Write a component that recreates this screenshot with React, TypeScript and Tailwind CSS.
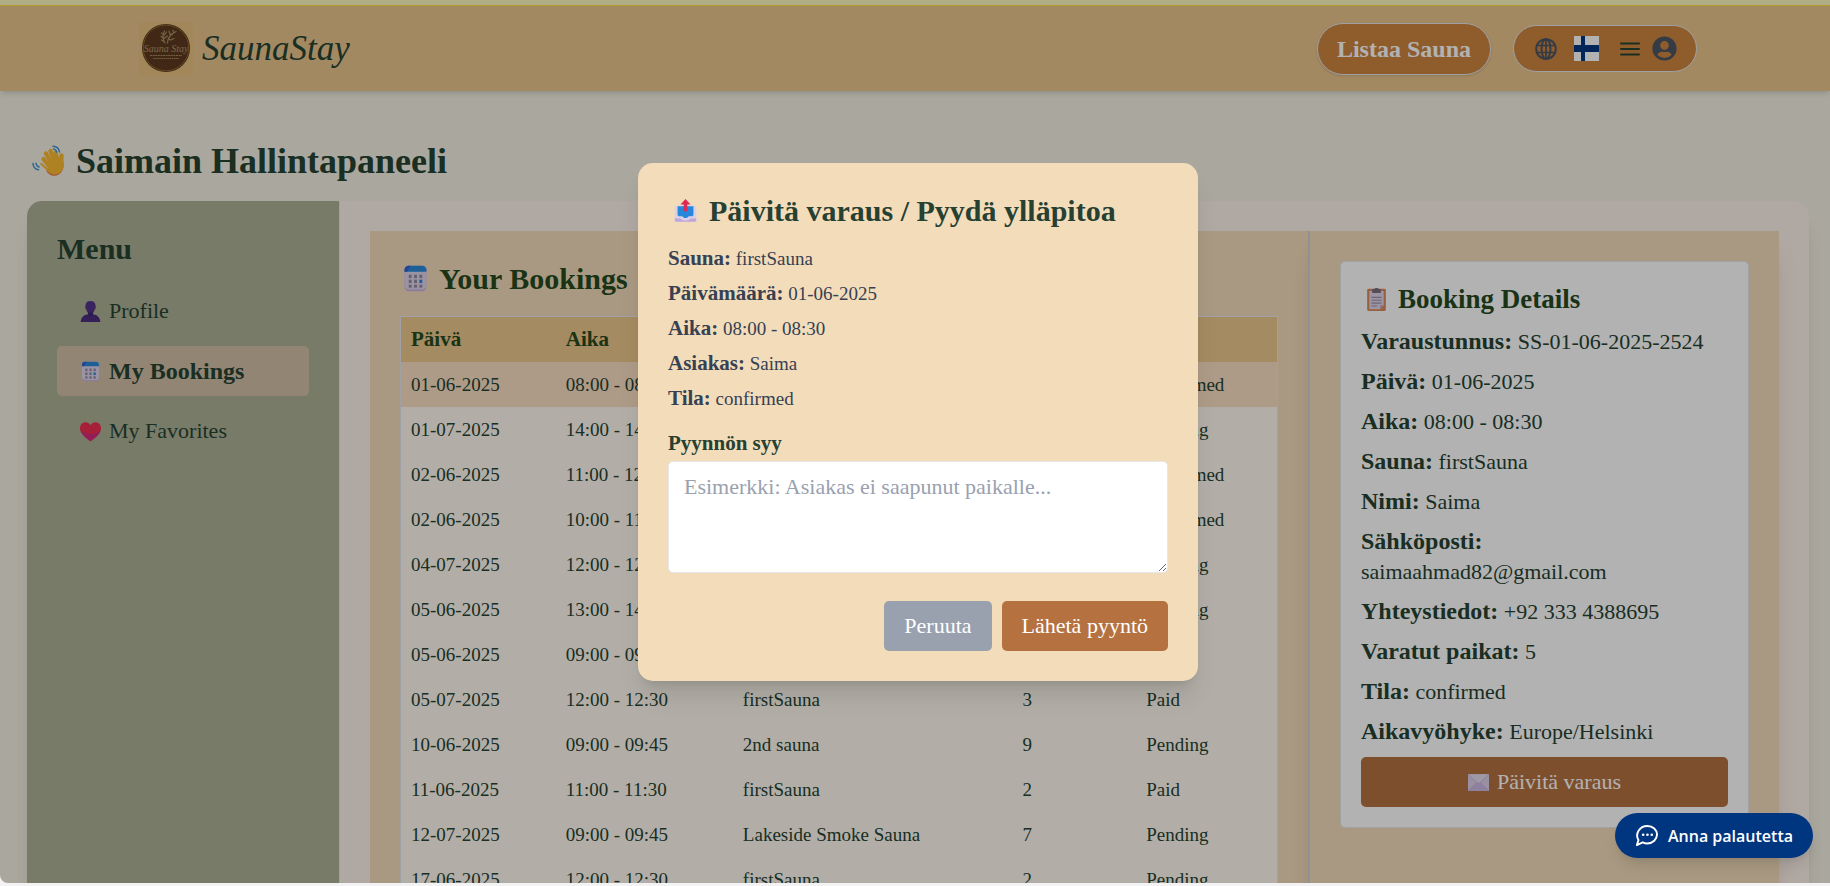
import React from "react";
import { FaUserCircle } from "react-icons/fa";

const CalendarIcon = ({ className }: { className: string }) => (
  <svg viewBox="0 0 32 32" className={className} aria-hidden="true">
    <rect x="3" y="1" width="26" height="30" rx="5" fill="#c9b0dc" />
    <rect x="3" y="1" width="26" height="28" rx="5" fill="#ddd3ea" />
    <path d="M3 8V6a5 5 0 0 1 5-5h16a5 5 0 0 1 5 5v2z" fill="#2a8ad8" />
    <path d="M3 8V6a5 5 0 0 1 5-5h2L6 8z" fill="#3a5fd0" />
    <g fill="#938a9e">
      <rect x="8" y="11.500" width="3.400" height="4" />
      <rect x="14.300" y="11.500" width="3.400" height="4" />
      <rect x="20.600" y="11.500" width="3.400" height="4" />
      <rect x="8" y="17.400" width="3.400" height="4" />
      <rect x="14.300" y="17.400" width="3.400" height="4" />
      <rect x="8" y="23.300" width="3.400" height="3.600" />
      <rect x="14.300" y="23.300" width="3.400" height="3.600" />
      <rect x="20.600" y="23.300" width="3.400" height="3.600" />
    </g>
    <rect x="20.600" y="17.400" width="3.400" height="4" fill="#2a86d8" />
  </svg>
);

const WaveIcon = ({ className }: { className: string }) => (
  <svg viewBox="0 0 32 32" className={className} aria-hidden="true">
    <path d="M14 25c2 5 8 7.500 13 4.500 3.500-2.500 4.600-6 4.600-10l-3 5-9 3z" fill="#e8804a" />
    <g fill="none" strokeLinecap="round" stroke="#f9b931" strokeWidth="4.400">
      <path d="M11.500 14l7 9" />
      <path d="M14 8.500l7 12" />
      <path d="M18.500 6l5 12" />
      <path d="M23.500 8l2.500 10" />
      <path d="M29.500 10.500L29 20" />
    </g>
    <path d="M9 17.500l7 6 2-9 8-3 5.500 4.500c1 5-.2 9.500-3.700 12-4 2.600-9.300 1.500-12.300-2L8 19z" fill="#f9b931" />
    <g fill="none" strokeLinecap="round" stroke="#3f92d2" strokeWidth="1.500">
      <path d="M21 1.200c3.600.3 6 2.600 6.500 5.800M21.500 4c1.800.4 2.800 1.400 3.200 3M1 18.500c.2 3.500 2.400 5.800 5.500 6.300M4 18.200c.2 2 1.200 3.200 3 3.800" />
    </g>
  </svg>
);

const ProfileIcon = ({ className }: { className: string }) => (
  <svg viewBox="0 0 32 32" className={className} aria-hidden="true">
    <path d="M8.500 6c.3-3.500 3-6 7.500-6s7.200 2.500 7.500 6l.5 3.500c0 2-.6 3-1.500 3.200C21.600 17 19.300 19.500 16 19.500S10.400 17 9.500 12.700C8.600 12.500 8 11.500 8 9.500z" fill="#54348a" />
    <path d="M1 32c.5-6.500 4-10.500 10-11.500h10c6 1 9.500 5 10 11.500z" fill="#4b2d7f" />
    <path d="M12 17h8v5l-4 1.500-4-1.500z" fill="#432775" />
  </svg>
);

const HeartIcon = ({ className }: { className: string }) => (
  <svg viewBox="0 0 32 32" className={className} aria-hidden="true">
    <path d="M16 31C8 25 0 19 0 11 0 5.500 4 2 8.500 2c3.200 0 6 1.500 7.500 4.500C17.500 3.500 20.300 2 23.500 2 28 2 32 5.500 32 11c0 8-8 14-16 20z" fill="#ee2f50" />
    <path d="M16 31C9 26 3 20.500 1 14.500 7 20 22 23 31 14.500 29 20.500 23 26 16 31z" fill="#d52a80" />
  </svg>
);

const OutboxIcon = ({ className }: { className: string }) => (
  <svg viewBox="0 0 32 32" className={className} aria-hidden="true">
    <path d="M3 9h26l2 3v17.500a2 2 0 0 1-2 2H3a2 2 0 0 1-2-2V12z" fill="#dccfe8" />
    <path d="M5 10h22v12a2 2 0 0 1-2 2h-4.500L18 26.500h-4L11.500 24H7a2 2 0 0 1-2-2z" fill="#2687db" />
    <path d="M1 27h8c1.500 2 4 3 7 3s5.500-1 7-3h8v2.500a2 2 0 0 1-2 2H3a2 2 0 0 1-2-2z" fill="#bfa6d8" />
    <path d="M16 0l7 7.500h-4.500V17h-5V7.500H9z" fill="#dd2a57" />
  </svg>
);

const ClipboardIcon = ({ className }: { className: string }) => (
  <svg viewBox="0 0 32 32" className={className} aria-hidden="true">
    <rect x="3" y="1" width="26" height="31" rx="2" fill="#d98a5c" />
    <path d="M6 4h20v20l-5 5.500H6z" fill="#e0d5ea" />
    <path d="M26 24h-5v5.500z" fill="#c3a0b4" />
    <path d="M10 3c0-1 1-1.500 3-1.500C13.300.5 14.500 0 16 0s2.700.5 3 1.500c2 0 3 .5 3 1.500v4H10z" fill="#776f7d" />
    <path d="M9 13h14M9 17h14M9 21h14M9 25h8" stroke="#9d91a8" strokeWidth="1.500" />
  </svg>
);

const EnvelopeIcon = ({ className }: { className: string }) => (
  <svg viewBox="0 0 32 32" className={className} aria-hidden="true">
    <rect x="0" y="3" width="32" height="26" rx="1" fill="#dccfe8" />
    <path d="M0 28L13 15h6l13 13a1 1 0 0 1-1 1H1a1 1 0 0 1-1-1z" fill="#cdb9e2" />
    <path d="M.5 4L14 16.500c1.200 1 2.800 1 4 0L31.500 4" fill="#e4daec" stroke="#bdadd0" strokeWidth="1" />
  </svg>
);

const LogoMark = () => (
  <svg viewBox="0 0 54 54" className="size-[54px]" role="img" aria-label="Sauna Stay">
    <rect width="54" height="54" fill="#e9c281" />
    <circle cx="27" cy="26" r="24" fill="#5e3a20" />
    <circle cx="27" cy="26" r="22.800" fill="none" stroke="#8f6a30" strokeWidth="1" />
    <g stroke="#a88c64" fill="none" strokeWidth="1.200" strokeLinecap="round">
      <path d="M26 21c-2.500-4-2.500-8-.5-12M28.500 21c0-4 2-7 5-9M22.500 11l3 2 2-3M22 14.500l3 2 3.500-2.500M22.500 18l3 2M30 9l1 3.500 3-1M34 8l.5 3 2.500-1.500M29.500 16.500l2 1.500 3.500-1.500" />
    </g>
    <text x="27" y="30" textAnchor="middle" fontSize="10" fontStyle="italic" fontFamily="'Liberation Serif', serif" fill="#b09468">Sauna Stay</text>
    <path d="M11 33.500h32" stroke="#a58a60" strokeWidth="1.200" strokeDasharray="2 .6" />
    <path d="M14 36.500h26" stroke="#a58a60" strokeWidth="1.200" strokeDasharray="1.500 .6" />
  </svg>
);

const bookings = [
  ["01-06-2025", "08:00 - 08:30", "firstSauna", "5", "confirmed"],
  ["01-07-2025", "14:00 - 14:30", "firstSauna", "2", "Pending"],
  ["02-06-2025", "11:00 - 12:00", "firstSauna", "4", "confirmed"],
  ["02-06-2025", "10:00 - 11:00", "2nd sauna", "3", "confirmed"],
  ["04-07-2025", "12:00 - 12:30", "firstSauna", "2", "Pending"],
  ["05-06-2025", "13:00 - 14:00", "firstSauna", "6", "Pending"],
  ["05-06-2025", "09:00 - 09:45", "2nd sauna", "2", "Paid"],
  ["05-07-2025", "12:00 - 12:30", "firstSauna", "3", "Paid"],
  ["10-06-2025", "09:00 - 09:45", "2nd sauna", "9", "Pending"],
  ["11-06-2025", "11:00 - 11:30", "firstSauna", "2", "Paid"],
  ["12-07-2025", "09:00 - 09:45", "Lakeside Smoke Sauna", "7", "Pending"],
  ["17-06-2025", "12:00 - 12:30", "firstSauna", "2", "Pending"],
];

const details = [
  ["Varaustunnus:", "SS-01-06-2025-2524"],
  ["Päivä:", "01-06-2025"],
  ["Aika:", "08:00 - 08:30"],
  ["Sauna:", "firstSauna"],
  ["Nimi:", "Saima"],
  ["Sähköposti:", "saimaahmad82@gmail.com"],
  ["Yhteystiedot:", "+92 333 4388695"],
  ["Varatut paikat:", "5"],
  ["Tila:", "confirmed"],
  ["Aikavyöhyke:", "Europe/Helsinki"],
];

const summary = [
  ["Sauna:", "firstSauna"],
  ["Päivämäärä:", "01-06-2025"],
  ["Aika:", "08:00 - 08:30"],
  ["Asiakas:", "Saima"],
  ["Tila:", "confirmed"],
];

function Header() {
  return (
    <header className="relative flex h-[86px] shrink-0 items-center justify-between border-t border-[#ffe03f] bg-[#e9c48d] pr-[133px] pl-[139px] shadow-md">
      <a href="#" className="flex items-center gap-[9px]">
        <LogoMark />
        <span className="text-[35px] leading-10 italic">SaunaStay</span>
      </a>
      <div className="flex items-center gap-[22px]">
        <button className="h-[52px] rounded-full border border-gray-200 bg-[#cd853f] px-[19px] text-[24px] font-bold text-white shadow-sm">
          Listaa Sauna
        </button>
        <div className="flex h-[47px] items-center rounded-full border border-gray-200 bg-[#cd853f] pr-[19px] pl-[21px]">
          <button aria-label="Kieli" className="mr-[17px]">
            <svg viewBox="0 0 22 22" className="size-[22px]" fill="none" stroke="#4b5563" strokeWidth="2">
              <circle cx="11" cy="11" r="9.800" />
              <ellipse cx="11" cy="11" rx="4.500" ry="9.800" />
              <path d="M11 1v20M2 7.500h18M2 14.500h18" strokeWidth="1.700" />
            </svg>
          </button>
          <svg viewBox="0 0 25 25" className="mr-[20px] size-[25px]" role="img" aria-label="Suomi">
            <rect width="25" height="25" fill="#fff" />
            <path d="M7 0h4v9h14v7H11v9H7v-9H0V9h7z" fill="#003580" />
          </svg>
          <button aria-label="Valikko" className="flex items-center gap-[11px]">
            <svg viewBox="0 0 22 22" className="size-[22px]" stroke="#264232" strokeWidth="2" strokeLinecap="round">
              <path d="M2 5.500h18M2 11h18M2 16.500h18" />
            </svg>
            <FaUserCircle className="size-[25px] text-[#4b5563]" />
          </button>
        </div>
      </div>
    </header>
  );
}

function Sidebar() {
  return (
    <nav className="w-[313px] shrink-0 border-r border-gray-200 bg-[#adb196] p-[30px]">
      <h2 className="mb-5 text-[30px] leading-[35px] font-bold">Menu</h2>
      <ul className="flex flex-col gap-2.5 text-[22px] leading-[30px]">
        <li>
          <a href="#" className="flex items-center gap-2 rounded-[5px] px-[23px] py-2.5">
            <ProfileIcon className="size-[21px]" />
            Profile
          </a>
        </li>
        <li>
          <a href="#" className="flex items-center gap-2 rounded-[5px] bg-[#d1bfa6] px-[23px] py-2.5 text-[24px] font-bold">
            <CalendarIcon className="size-[21px]" />
            My Bookings
          </a>
        </li>
        <li>
          <a href="#" className="flex items-center gap-2 rounded-[5px] px-[23px] py-2.5">
            <HeartIcon className="size-[21px]" />
            My Favorites
          </a>
        </li>
      </ul>
    </nav>
  );
}

function BookingsTable() {
  return (
    <section className="min-w-0 flex-1 bg-[#f3dcba] p-[30px]">
      <h2 className="mb-5 flex items-center gap-2.5 pl-0.5 text-[30px] leading-[35px] font-bold whitespace-nowrap text-[#264a1f]">
        <CalendarIcon className="size-[27px]" />
        Your Bookings
      </h2>
      <table className="w-full table-fixed border border-gray-200 bg-[#fffaf0] text-left text-[19px] leading-[25px]">
        <thead>
          <tr className="bg-[#ecc78b] text-[21px] text-[#264a1f]">
            <th className="w-[17.7%] p-2.5">Päivä</th>
            <th className="w-[20.2%] p-2.5">Aika</th>
            <th className="w-[31.9%] p-2.5">Sauna</th>
            <th className="w-[14.1%] p-2.5">Paikat</th>
            <th className="w-[16.1%] p-2.5">Tila</th>
          </tr>
        </thead>
        <tbody>
          {bookings.map((row, i) => (
            <tr key={i} className={i === 0 ? "bg-[#fadfc2]" : ""}>
              {row.map((cell, j) => (
                <td key={j} className="p-2.5 whitespace-nowrap">
                  {cell}
                </td>
              ))}
            </tr>
          ))}
        </tbody>
      </table>
    </section>
  );
}

function BookingDetails() {
  return (
    <aside className="w-[471px] shrink-0 border-l-2 border-[#cfd0d4] bg-[#f3dcba] p-[30px] shadow-xl">
      <div className="rounded-[5px] border border-gray-200 bg-white p-5">
        <h3 className="mb-2.5 flex items-center gap-2.5 pl-1 text-[27px] leading-[35px] font-bold text-[#264a1f]">
          <ClipboardIcon className="size-[23px]" />
          Booking Details
        </h3>
        <div className="flex flex-col gap-2.5 text-[22px] leading-[30px]">
          {details.map(([label, value]) => (
            <p key={label}>
              <strong className="text-[24px] leading-none">{label}</strong> {value}
            </p>
          ))}
        </div>
        <button className="mt-2.5 flex w-full items-center justify-center gap-2 rounded-[5px] bg-[#b57240] py-2.5 text-[22px] leading-[30px] text-white">
          <EnvelopeIcon className="size-[21px]" />
          Päivitä varaus
        </button>
      </div>
    </aside>
  );
}

function RequestDialog() {
  return (
    <div className="absolute inset-0 flex items-center justify-center bg-black/30 pr-[21px] pb-10 pl-[27px]">
      <div
        role="dialog"
        aria-modal="true"
        aria-labelledby="request-title"
        className="w-full max-w-[560px] rounded-[15px] bg-[#f3dcba] p-[30px] shadow-xl"
      >
        <h2 id="request-title" className="mb-[18px] flex items-center gap-3 pl-1.5 text-[30px] leading-[35px] font-bold whitespace-nowrap text-[#264032]">
          <OutboxIcon className="size-[23px]" />
          Päivitä varaus / Pyydä ylläpitoa
        </h2>
        <div className="flex flex-col gap-2.5 text-[19px] leading-[25px] text-gray-700">
          {summary.map(([label, value]) => (
            <p key={label}>
              <strong className="text-[21px] leading-none">{label}</strong> {value}
            </p>
          ))}
        </div>
        <label htmlFor="reason" className="mt-5 mb-[5px] block text-[21px] leading-[25px] font-bold text-[#264032]">
          Pyynnön syy
        </label>
        <textarea
          id="reason"
          rows={3}
          placeholder="Esimerkki: Asiakas ei saapunut paikalle..."
          className="block w-full rounded-[5px] border border-gray-200 bg-white px-[15px] py-2.5 text-[22px] leading-[30px] placeholder:text-gray-400"
        />
        <div className="mt-7 flex justify-end gap-2.5 text-[22px] leading-[30px] text-white">
          <button className="rounded-[5px] bg-gray-400 px-5 py-2.5">Peruuta</button>
          <button className="rounded-[5px] bg-[#b57240] px-5 py-2.5">Lähetä pyyntö</button>
        </div>
      </div>
    </div>
  );
}

export default function App() {
  return (
    <div className="h-screen bg-[#f3f3f3] pb-[3px] font-['Liberation_Serif',serif] text-[#264232]">
      <div className="relative flex h-full flex-col overflow-hidden rounded-bl-lg bg-[#f4f0e4]">
        <div className="h-[5px] shrink-0 bg-[#fdf6bf]" />
        <Header />
        <main className="flex-1 pt-[50px] pr-[21px] pl-[27px]">
          <h1 className="mb-5 flex items-center gap-3 pl-[5px] text-[36px] leading-[40px] font-bold">
            <WaveIcon className="size-[32px]" />
            Saimain Hallintapaneeli
          </h1>
          <div className="flex overflow-hidden rounded-[15px] bg-[#fdf1e8] shadow-xl">
            <Sidebar />
            <div className="flex min-w-0 flex-1 p-[30px]">
              <BookingsTable />
              <BookingDetails />
            </div>
          </div>
        </main>
        <RequestDialog />
        <button className="absolute right-[17px] bottom-[25px] flex h-[45px] items-center gap-2.5 rounded-full bg-[#003580] px-5 font-['Open_Sans',sans-serif] text-[16px] font-semibold text-white shadow-lg">
          <svg viewBox="0 0 24 24" className="size-[23px]" fill="none" stroke="currentColor" strokeWidth="2" strokeLinecap="round" strokeLinejoin="round">
            <path d="M2 22l1.600-5.200C-.2 10.500 4.500 2 13 2c5.600 0 10 4 10 9s-4.400 9.300-10 9.300c-1.800 0-3.500-.4-5-1.200z" />
            <path d="M8.500 11.200h.01M13 11.200h.01M17.500 11.200h.01" strokeWidth="2.800" />
          </svg>
          Anna palautetta
        </button>
      </div>
    </div>
  );
}
